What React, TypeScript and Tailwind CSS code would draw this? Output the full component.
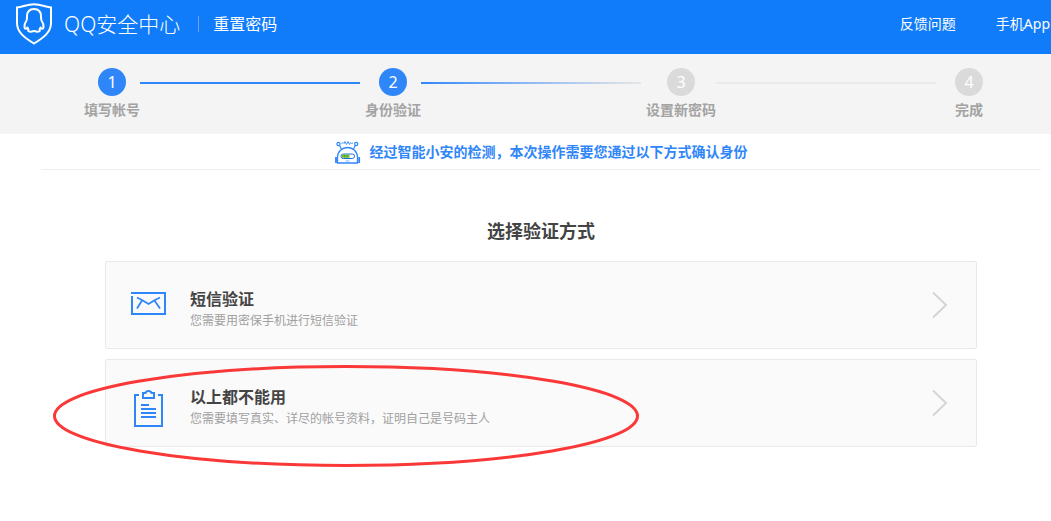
import { ReactNode } from "react";
import clsx from "clsx";

const steps = [
  { label: "填写帐号", active: true, line: "bg-[#2f86f9]" },
  { label: "身份验证", active: true, line: "bg-linear-to-r from-[#2f86f9] to-[#e6e6e6]" },
  { label: "设置新密码", active: false, line: "bg-[#eaeaea]" },
  { label: "完成", active: false, line: null },
];

const ShieldLogo = () => (
  <svg width="36" height="42" viewBox="0 0 36 42" fill="none" stroke="white" strokeWidth="2" aria-hidden="true">
    <path d="M1 4.5C7 3.8 11 1.2 18 1.2S29 3.8 35 4.5V20C35 29 28 34.5 18 40.5C8 34.5 1 29 1 20Z" />
    <path
      d="M18 6C13.5 6 11 9 11 13.5C11 15 11 16 10.500 17.500C9 19.500 8.300 22 8.500 24.500C8.700 26.300 10.200 26 11.500 24.500C11.800 25.500 12 26 12.500 26.700C11.500 28 13 28.800 15 28.700C16.500 28.600 17 28 18 28S19.500 28.600 21 28.700C23 28.800 24.500 28 23.500 26.700C24 26 24.200 25.500 24.500 24.500C25.800 26 27.300 26.300 27.500 24.500C27.700 22 27 19.500 25.500 17.500C25 16 25 15 25 13.500C25 9 22.500 6 18 6Z"
      strokeLinejoin="round"
    />
  </svg>
);

const RobotIcon = () => (
  <svg width="27" height="24" viewBox="0 0 27 24" fill="none" stroke="#2f86f9" aria-hidden="true">
    <path d="M2.500 23V17.500C2.500 11.500 7 7.500 12.500 7.500S22.500 11.500 22.500 17.500V23Z" strokeWidth="1.3" />
    <path d="M1 17V23M24.200 17V23" strokeWidth="1.8" />
    <circle cx="3.500" cy="4" r="1.6" strokeWidth="1.2" />
    <circle cx="21.200" cy="4" r="1.6" strokeWidth="1.2" />
    <path d="M4.500 5.500L6.500 9M20.300 5.500L18.500 9" strokeWidth="1.2" />
    <path d="M6.500 3.500L8 2.500L9 3.500L10 1.500L11.500 4.500L13 1.500L14.500 4.500L15.500 2.500L16.500 3.500L18 3" strokeWidth="0.9" />
    <rect x="6" y="14" width="13.500" height="4.500" rx="2.200" fill="white" stroke="#1d6be0" />
    <path d="M7 16.200H14.500" stroke="#6abf1c" strokeWidth="3" />
    <path d="M9.500 14.700V17.700M12 14.700V17.700" stroke="#3f9a2c" strokeWidth="0.6" />
    <path d="M10.500 21H14.500" strokeWidth="0.6" />
  </svg>
);

const MailIcon = () => (
  <svg width="36" height="48" viewBox="0 0 36 48" fill="none" stroke="#2f86f9" strokeWidth="2" aria-hidden="true">
    <path d="M1 12H35V33H2V15" />
    <path d="M7 16.500L12 19L18.500 23L25 19L30 16.500M12 19.500L7 27.500M24.500 19.500L30 27.500" strokeWidth="1.800" />
  </svg>
);

const ClipboardIcon = () => (
  <svg width="36" height="48" viewBox="0 0 36 48" fill="none" stroke="#2f86f9" strokeWidth="2" aria-hidden="true">
    <path d="M9 16H5V47H32V16H28" />
    <path d="M13 19V14H15.500C16 12.500 17 12 18.500 12S21 12.500 21.500 14H24V19Z" />
    <path d="M11 26H19M11 30H26M11 34H26M11 38H26" />
  </svg>
);

interface MethodCardProps {
  icon: ReactNode;
  title: string;
  description: string;
}

function MethodCard({ icon, title, description }: MethodCardProps) {
  return (
    <button
      type="button"
      className="flex h-22 w-full items-center rounded-xs border border-[#e9e9e9] bg-[#fafafa] px-6 text-left"
    >
      {icon}
      <span className="ml-6 flex flex-1 flex-col pt-2">
        <span className="text-base leading-6 font-bold text-[#444]">{title}</span>
        <span className="text-xs leading-5 text-[#a0a0a0]">{description}</span>
      </span>
      <svg width="16" height="28" viewBox="0 0 16 28" fill="none" stroke="#d5d5d5" strokeWidth="2" className="mr-1" aria-hidden="true">
        <path d="M1 1.500L14 14L1 26.500" />
      </svg>
    </button>
  );
}

export default function App() {
  return (
    <div className="overflow-x-hidden bg-white pb-12 font-['Noto_Sans','Noto_Sans_CJK_SC',sans-serif] text-sm">
      <header className="flex h-[54px] items-center bg-[#107cfa] pl-4 whitespace-nowrap text-white">
        <div className="flex items-center pb-1.5">
          <ShieldLogo />
          <h1 className="ml-3 text-[21px] leading-8 font-light">QQ安全中心</h1>
          <span className="mr-3.5 ml-[18px] h-4 w-px bg-[#6f9ff8]" />
          <h2 className="text-base">重置密码</h2>
        </div>
        <nav className="ml-auto flex gap-10 pr-px pb-1.5">
          <a href="#feedback">反馈问题</a>
          <a href="#app">手机App</a>
        </nav>
      </header>

      <ol className="flex h-20 gap-[5px] bg-[#f4f4f4] pt-3.5 pr-[54px] pl-[84px]">
        {steps.map((step, index) => (
          <li key={step.label} className={clsx("flex", step.line && "flex-auto")}>
            <div className="flex min-w-14 flex-col items-center">
              <span
                className={clsx(
                  "flex size-7 items-center justify-center rounded-full text-base text-white",
                  step.active ? "bg-[#2f86f9]" : "bg-[#dadada]"
                )}
              >
                {index + 1}
              </span>
              <span className="mt-1 leading-5 font-bold whitespace-nowrap text-[#a3a3a3]">{step.label}</span>
            </div>
            {step.line && <span className={clsx("mt-3.5 h-0.5 flex-1", step.line)} />}
          </li>
        ))}
      </ol>

      <main className="pr-[10px] pl-[41px]">
        <div className="flex h-9 items-center justify-center gap-2 border-b border-[#edf0f4]">
          <RobotIcon />
          <p className="font-bold text-[#2f86f9]">经过智能小安的检测，本次操作需要您通过以下方式确认身份</p>
        </div>

        <section className="px-16 pt-[47px]">
          <h2 className="text-center text-lg leading-7 font-bold text-[#444]">选择验证方式</h2>
          <div className="mt-4 flex flex-col gap-2.5">
            <MethodCard icon={<MailIcon />} title="短信验证" description="您需要用密保手机进行短信验证" />
            <div className="relative">
              <MethodCard
                icon={<ClipboardIcon />}
                title="以上都不能用"
                description="您需要填写真实、详尽的帐号资料，证明自己是号码主人"
              />
              <svg
                width="586"
                height="102"
                viewBox="0 0 586 102"
                fill="none"
                className="pointer-events-none absolute top-1.5 -left-13"
                aria-hidden="true"
              >
                <ellipse cx="293" cy="51" rx="291.500" ry="49.500" stroke="#fa3838" strokeWidth="3" />
              </svg>
            </div>
          </div>
        </section>
      </main>
    </div>
  );
}
